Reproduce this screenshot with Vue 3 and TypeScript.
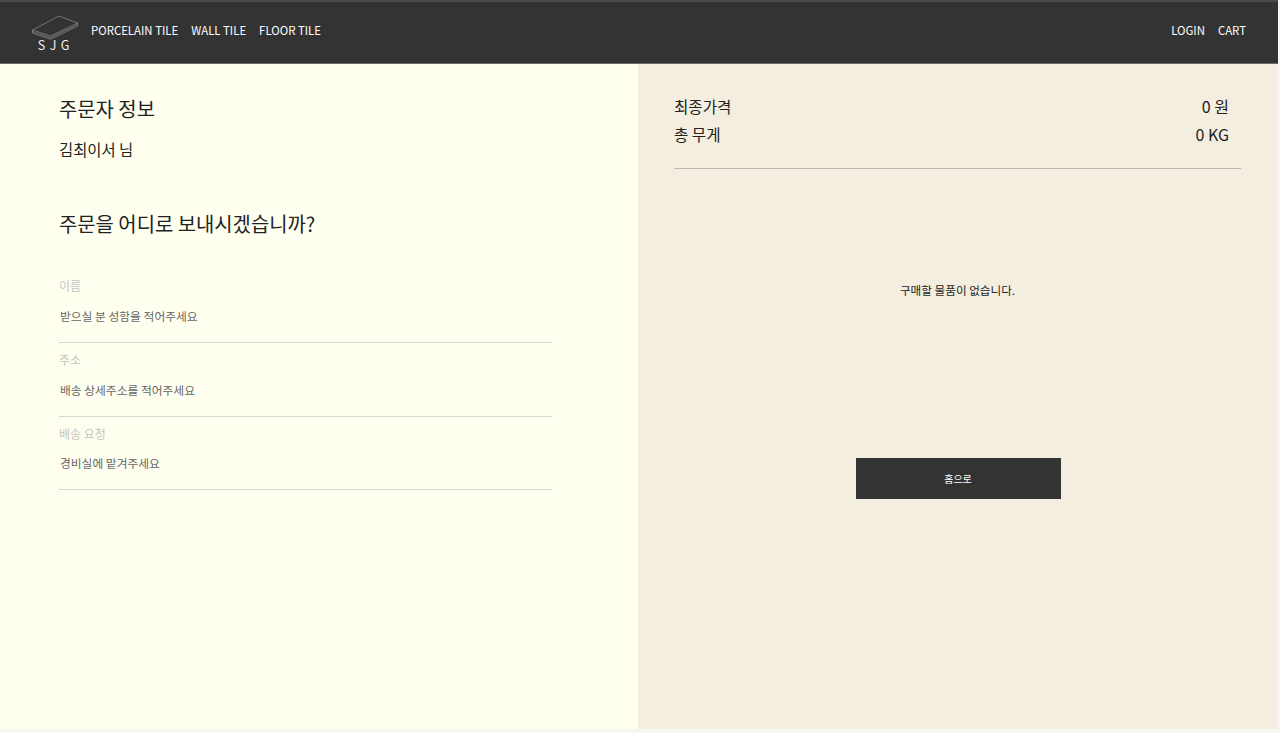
<script setup lang="ts">
const fields = [
  { label: '이름', placeholder: '받으실 분 성함을 적어주세요' },
  { label: '주소', placeholder: '배송 상세주소를 적어주세요' },
  { label: '배송 요청', placeholder: '경비실에 맡겨주세요' },
]
</script>

<template>
  <div class="page">
    <header class="topbar">
      <div class="brand">
        <svg class="logo" width="47" height="26" viewBox="0 0 47 26" fill="none" stroke="#b4b4b4" stroke-width="0.5">
          <path d="M0.5 15 L27 1 L45.5 8 L18.5 21 Z" />
          <path d="M0.5 15 V16.6 L18.5 22.6 L45.5 9.6 V8" />
          <path d="M0.5 16.6 V18.2 L18.5 24.2 L45.5 11.2 V9.6" />
        </svg>
        <span class="brand-name">S J G</span>
      </div>
      <nav class="nav">
        <a>PORCELAIN TILE</a>
        <a>WALL TILE</a>
        <a>FLOOR TILE</a>
      </nav>
      <nav class="nav account">
        <a>LOGIN</a>
        <a>CART</a>
      </nav>
    </header>
    <main class="body">
      <section class="left">
        <h2 class="title">주문자 정보</h2>
        <p class="buyer">김최이서 님</p>
        <h2 class="title where">주문을 어디로 보내시겠습니까?</h2>
        <div class="form">
          <label v-for="f in fields" :key="f.label" class="field">
            <span class="label">{{ f.label }}</span>
            <input class="input" :placeholder="f.placeholder" />
          </label>
        </div>
      </section>
      <section class="right">
        <div class="sum-row"><span class="sum-label">최종가격</span><span>0 원</span></div>
        <div class="sum-row"><span class="sum-label">총 무게</span><span>0 KG</span></div>
        <hr class="rule" />
        <p class="empty">구매할 물품이 없습니다.</p>
        <button class="home">홈으로</button>
      </section>
    </main>
  </div>
</template>

<style>
html, body { margin: 0; background: #f6f6f4; }
</style>

<style scoped>
.page {
  width: 1278px;
  height: 729px;
  display: flex;
  flex-direction: column;
  font-family: "Noto Sans CJK KR", "Noto Sans", sans-serif;
  color: #222;
}
.topbar {
  flex: none;
  height: 61px;
  border-top: 2px solid #4a4a4c;
  border-bottom: 1px solid #6a6a6a;
  background: #333;
  display: flex;
  align-items: flex-start;
  padding: 0 32px;
  color: #fff;
}
.brand {
  width: 47px;
  display: flex;
  flex-direction: column;
  align-items: center;
  margin-right: 12px;
  margin-top: 13px;
}
.logo { display: block; }
.brand-name {
  font-size: 12.5px;
  line-height: 12px;
  margin-top: -2px;
  color: #eee;
  letter-spacing: 0.8px;
  margin-left: -3px;
}
.nav {
  display: flex;
  gap: 13px;
  font-size: 11.4px;
  line-height: 16px;
  margin-top: 20px;
}
.account { margin-left: auto; }
.body { flex: 1; display: flex; min-height: 0; }
.left {
  width: 638px;
  background: #fffff0;
  padding: 31px 86px 0 59px;
  box-sizing: border-box;
}
.title {
  margin: 0;
  font-size: 19.9px;
  line-height: 28px;
  font-weight: 400;
}
.buyer { margin: 14px 0 0; font-size: 15.4px; line-height: 24px; }
.where { margin-top: 49px; }
.form { margin-top: 31px; display: flex; flex-direction: column; }
.field { display: flex; flex-direction: column; padding-top: 9px; }
.label { font-size: 12px; line-height: 16px; color: #c4c4c0; }
.input {
  height: 48.8px;
  box-sizing: border-box;
  border: 0;
  border-bottom: 1px solid #d6d6d2;
  background: transparent;
  outline: none;
  padding: 0 1px 5px;
  font: inherit;
  font-size: 11.75px;
}
.input::placeholder { color: #666; opacity: 1; }
.right {
  flex: 1;
  background: #f4eee0;
  padding: 28px 37px 0 36px;
  display: flex;
  flex-direction: column;
}
.sum-row {
  display: flex;
  justify-content: space-between;
  padding-right: 12px;
  font-size: 16px;
  line-height: 28px;
}
.sum-label { font-size: 15.6px; }
.rule { width: 100%; margin: 20px 0 0; border: 0; border-top: 1px solid #b9bbae; }
.empty { margin: 112px 0 0; text-align: center; font-size: 11.6px; line-height: 18px; }
.home {
  align-self: center;
  margin: 159px 0 0 1px;
  width: 205px;
  height: 41px;
  background: #333;
  color: #fff;
  border: 0;
  font: inherit;
  font-size: 10px;
}
</style>
